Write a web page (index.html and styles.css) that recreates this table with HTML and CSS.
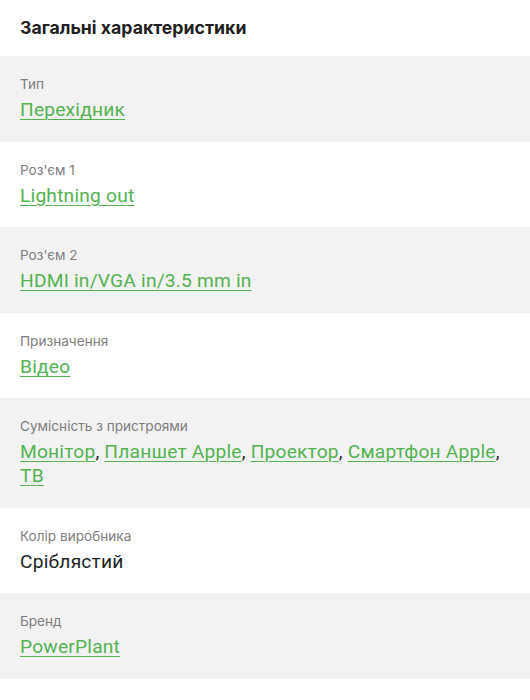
FILE: index.html
```html
<!DOCTYPE html>
<html>
<head>
    <meta charset="utf-8">
    <title>Загальні характеристики</title>
    <link rel="stylesheet" href="styles.css">
</head>
<body>
    <h2 class="specs-title">Загальні характеристики</h2>

    <dl class="specs">
        <div class="spec-row">
            <dt class="spec-label">Тип</dt>
            <dd class="spec-value"><a href="#">Перехідник</a></dd>
        </div>
        <div class="spec-row">
            <dt class="spec-label">Роз'єм 1</dt>
            <dd class="spec-value"><a href="#">Lightning out</a></dd>
        </div>
        <div class="spec-row">
            <dt class="spec-label">Роз'єм 2</dt>
            <dd class="spec-value"><a href="#">HDMI in/VGA in/3.5 mm in</a></dd>
        </div>
        <div class="spec-row">
            <dt class="spec-label">Призначення</dt>
            <dd class="spec-value"><a href="#">Відео</a></dd>
        </div>
        <div class="spec-row">
            <dt class="spec-label">Сумісність з пристроями</dt>
            <dd class="spec-value"><a href="#">Монітор</a>, <a href="#">Планшет Apple</a>, <a href="#">Проектор</a>, <a href="#">Смартфон Apple</a>, <a href="#">ТВ</a></dd>
        </div>
        <div class="spec-row">
            <dt class="spec-label">Колір виробника</dt>
            <dd class="spec-value">Сріблястий</dd>
        </div>
        <div class="spec-row">
            <dt class="spec-label">Бренд</dt>
            <dd class="spec-value"><a href="#">PowerPlant</a></dd>
        </div>
    </dl>
</body>
</html>
```

FILE: styles.css
```css
body {
    margin: 0;
    background: #fff;
    font-family: Inter, "Noto Sans", sans-serif;
    color: #221f1f;
}
.specs-title {
    margin: 0;
    padding: 0 20px;
    height: 56px;
    line-height: 56px;
    font-size: 17.7px;
    font-weight: 700;
}
.specs {
    margin: 0;
}
.spec-row {
    padding: 19px 20px 19.5px;
}
.spec-row:nth-child(odd) {
    background-color: #f2f2f2;
}
.spec-label {
    font-size: 13.6px;
    line-height: 18px;
    color: #7d7d7d;
    margin-bottom: 5px;
}
.spec-value {
    margin: 0;
    font-family: Roboto, "Noto Sans", sans-serif;
    font-size: 19.2px;
    line-height: 24px;
    letter-spacing: 0.2px;
}
.spec-value a {
    color: #52b34f;
    text-decoration: underline;
    text-decoration-thickness: 1px;
    text-underline-offset: 3px;
}
```
